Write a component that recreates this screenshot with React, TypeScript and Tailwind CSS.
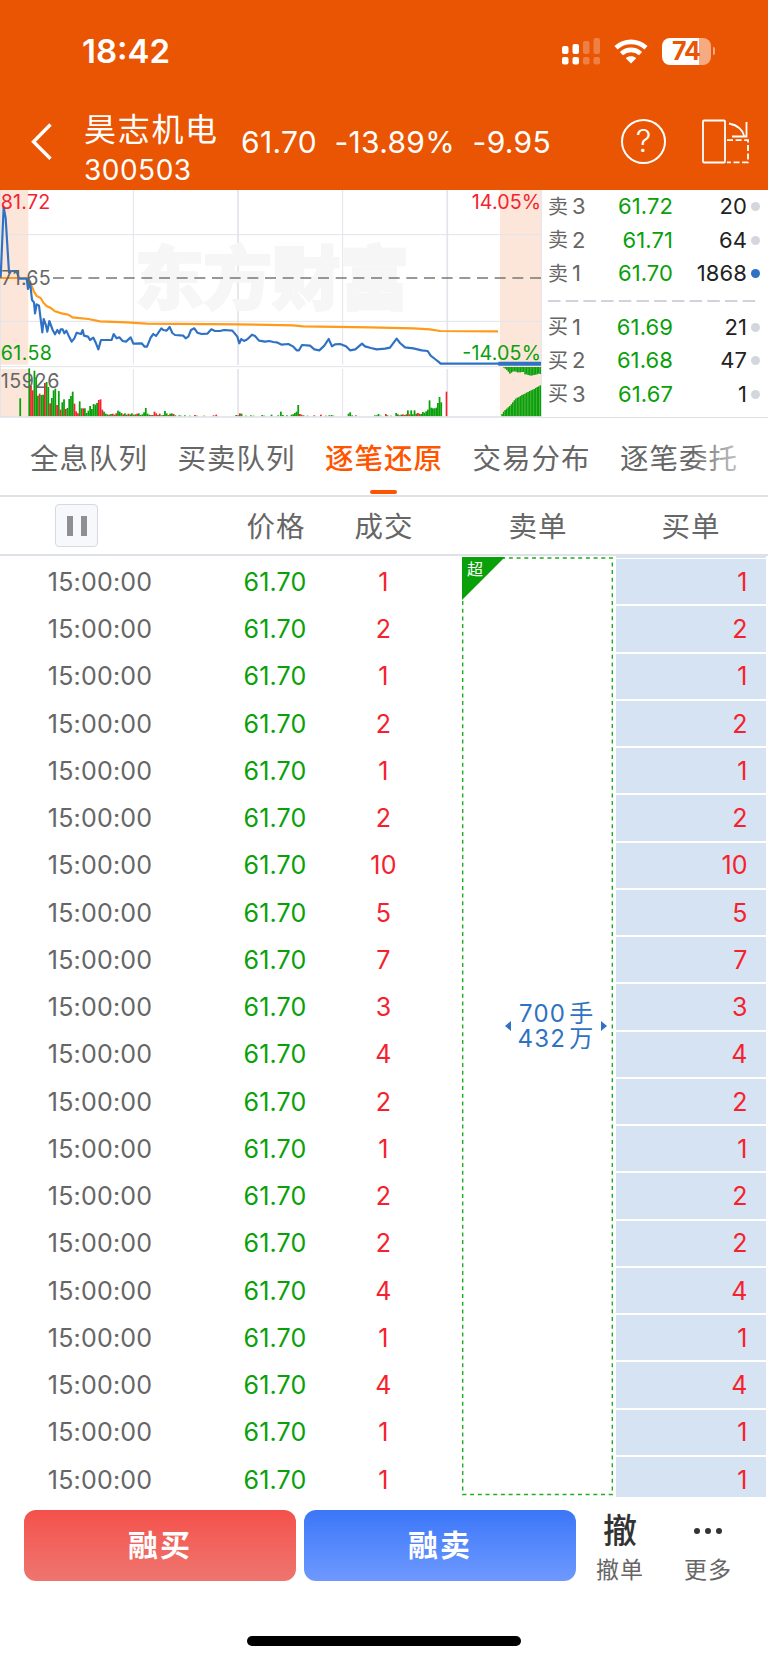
import type { ReactNode } from 'react';

type Level = { label: string; price: string; volume: number; active?: boolean };

const asks: Level[] = [
  { label: '卖3', price: '61.72', volume: 20 },
  { label: '卖2', price: '61.71', volume: 64 },
  { label: '卖1', price: '61.70', volume: 1868, active: true },
];

const bids: Level[] = [
  { label: '买1', price: '61.69', volume: 21 },
  { label: '买2', price: '61.68', volume: 47 },
  { label: '买3', price: '61.67', volume: 1 },
];

const tabs = ['全息队列', '买卖队列', '逐笔还原', '交易分布', '逐笔委托'];
const activeTab = 2;

const trades = [1, 2, 1, 2, 1, 2, 10, 5, 7, 3, 4, 2, 1, 2, 2, 4, 1, 4, 1, 1];

const RED = '#f5222d';
const GREEN = '#0aa00a';

// Minute volume bars: height, negative when the bar is red
const openBars = [
  144, -92, -78, 137, 118, 62, -68, 64, 65, -100, 103, 88, -39, 55, 78, 83, -34, 76, -20, 42, 51, -22, 25, 52, 61, 74,
  -38, -15, -9, 45, 24, -24, 24, 10, 17, 31, 22, 37, 35, 40, -49, -51, -20, 14, 8, 6, -5, 7, -8, 5, -9, 17, 14, 10, -6,
  9, 5, -8, 6, 9, -5, 6, -8, 9, 4, 6, 12, 25, 8, 5, -4, 4, -14, -9, 4, -8, 3, 4, 16, 9, -4, 8, 9, -7, 3,
];
const closeBars = [
  10, 6, -3, 5, -6, 4, -6, 18, -6, 18, 6, 18, 8, -10, -8, 7, 13, 11, 15, 20, 48, 26, 24, 24, 26, 40, 58, 42,
];
const sparseBars: [number, number][] = [
  [535, 3], [540, 2], [552, 3], [567, 2], [582, -4], [588, 2], [610, 2], [638, -3], [646, -5], [706, 4], [712, 3],
  [717, -9], [722, 8], [735, 2], [750, 3], [758, 2], [784, 4], [790, 2], [812, 5], [832, 3], [840, 14], [846, 4],
  [858, 3], [872, 5], [877, 6], [882, 10], [887, 14], [892, 34], [897, -7], [902, -5], [908, 3], [920, 2], [940, -3],
  [960, -5], [975, -2], [985, 3], [992, 4], [998, 2], [1043, 8], [1048, 12], [1054, 3], [1065, -3], [1122, 3],
  [1128, 3], [1133, 7], [1140, 2], [1155, -7], [1160, 3], [1170, 2],
];
const askDepth = [0, 0, 2, 5, 9, 14, 20, 17, 14, 13, 14, 16, 16, 16, 15, 15, 22, 22, 24, 25, 26, 25, 24, 23, 22, 20, 21];
const bidDepth = [7, 14, 19, 23, 27, 31, 36, 42, 48, 53, 56, 58, 61, 64, 66, 68, 71, 73, 76, 78, 80, 82, 85, 88, 90, 93];

const pricePoints =
  '2,278 11,65 17,100 27,262 35,258 50,258 57,281 80,281 84,312 90,290 96,345 102,352 105,385 110,358 117,362 127,442 131,402 137,418 142,440 148,408 158,435 165,448 172,435 178,445 182,433 188,433 193,445 199,437 206,452 215,470 223,460 230,443 243,447 248,435 252,452 264,455 270,465 280,458 288,475 295,493 303,465 335,465 341,447 350,460 358,457 368,468 378,470 392,457 400,476 425,475 434,485 441,485 452,458 460,447 468,453 484,430 490,435 500,437 509,426 517,444 525,450 550,452 557,460 565,455 573,435 583,430 592,443 605,447 622,446 634,433 645,438 660,438 672,435 697,437 712,455 718,475 724,462 732,468 742,463 756,449 765,453 777,467 795,470 808,468 820,471 830,472 845,479 865,477 880,485 890,496 897,496 906,480 930,482 943,493 958,496 973,482 986,462 996,484 1005,478 1020,477 1038,484 1050,496 1066,493 1086,476 1095,484 1113,489 1130,493 1155,491 1170,488 1190,461 1200,474 1215,487 1240,490 1265,496 1283,498 1292,512 1305,522 1315,530 1322,536 1623,536';
const averagePoints =
  '0,279 80,279 90,290 96,305 102,320 110,333 122,339 130,353 140,363 152,369 165,379 185,385 205,389 218,397 265,402 300,409 380,412 440,416 714,418 880,421 910,424 1110,427 1240,430 1290,433 1320,438 1494,439';

function Bar({ x, h }: { x: number; h: number }) {
  return <rect x={x} y={694 - Math.abs(h)} width={5.3} height={Math.abs(h)} fill={h < 0 ? RED : GREEN} />;
}

function MinuteChart() {
  return (
    <svg className="block h-[228px] w-[542px] shrink-0" viewBox="0 15 1626 684" fontFamily="Inter" fontSize="59">
      <rect x="0" y="15" width="85" height="524" fill="#fce6da" />
      <rect x="0" y="552" width="85" height="143" fill="#fce6da" />
      <rect x="1500" y="15" width="123" height="680" fill="#fce6da" />
      <g stroke="#e2e4ea" strokeWidth="3">
        <path d="M1.5 15V696M400 15V539M400 552V696M1028 15V539M1028 552V696M1624 15V696" />
        <path d="M714 15V539M714 552V696M1342 15V539M1342 552V696" strokeWidth="5" />
        <path d="M0 149H1623M0 409H1623M0 545H1500" />
      </g>
      <text
        x="404"
        y="358"
        fontFamily="Noto Sans CJK SC"
        fontWeight="900"
        fontSize="208"
        textLength="824"
        fill="#f6f6f7"
        stroke="#f6f6f7"
        strokeWidth="6"
      >
        东方财富
      </text>
      <path d="M150 279H1623" stroke="#777" strokeWidth="5" strokeDasharray="33 20" strokeDashoffset="-9" />
      <polyline points={averagePoints} fill="none" stroke="#ff9a1a" strokeWidth="6.5" />
      <polyline points={pricePoints} fill="none" stroke="#2f72c4" strokeWidth="6.5" strokeLinejoin="round" />
      <path d="M1495 536H1623" stroke="#2f72c4" strokeWidth="12" />
      <Bar x={58} h={54} />
      {openBars.map((h, i) => (
        <Bar key={i} x={85 + i * 5.22} h={h} />
      ))}
      {sparseBars.map(([x, h]) => (
        <Bar key={x} x={x} h={h} />
      ))}
      {closeBars.map((h, i) => (
        <Bar key={i} x={1186 + i * 5.0} h={h} />
      ))}
      <rect x="1337" y="620" width="5" height="74" fill={RED} />
      {askDepth.map((h, i) => (
        <rect key={i} x={1500 + i * 4.55} y="546" width="4.7" height={h} fill={GREEN} />
      ))}
      {bidDepth.map((h, i) => (
        <rect key={i} x={1504 + i * 4.58} y={694 - h} width="4.7" height={h} fill={GREEN} />
      ))}
      <path d="M0 696H1626" stroke="#dcdfe6" strokeWidth="4" />
      <text x="2" y="71" fill={RED} textLength="149">81.72</text>
      <text x="4" y="299" fill="#666" textLength="148">71.65</text>
      <text x="2" y="524" fill={GREEN} textLength="154">61.58</text>
      <text x="2" y="609" fill="#666" textLength="176">15926</text>
      <text x="1623" y="71" fill={RED} textAnchor="end" textLength="208">14.05%</text>
      <text x="1623" y="524" fill={GREEN} textAnchor="end" textLength="236">-14.05%</text>
    </svg>
  );
}

function LevelRow({ level }: { level: Level }) {
  return (
    <div className="flex h-[33.5px] items-center text-[22px]">
      <span className="flex w-[46px] items-center text-[20px] text-[#666]">
        {level.label[0]}
        <span className="ml-[4px] text-[22px]">{level.label[1]}</span>
      </span>
      <span className="w-[79px] text-right tracking-[0.1px] text-[#0aa00a]">{level.price}</span>
      <span className="flex-1 text-right tracking-[0.1px] text-[#222]">{level.volume}</span>
      <span className={`ml-1 size-[9px] rounded-full ${level.active ? 'bg-[#2f72c4]' : 'bg-[#d3d6dd]'}`} />
    </div>
  );
}

function StatusBar() {
  return (
    <div className="flex h-[102px] items-center pl-[82px] pr-[53px]">
      <span className="pt-[2px] text-[33px] font-semibold">18:42</span>
      <svg className="ml-auto h-[28px] w-[39px]" viewBox="0 0 39 28" fill="#fff">
        <rect x="0" y="9" width="6.5" height="8" rx="2" />
        <rect x="10.5" y="7" width="6.5" height="10" rx="2" />
        <rect x="0" y="20" width="6.5" height="7.5" rx="2" />
        <rect x="10.5" y="20" width="6.5" height="7.5" rx="2" />
        <g opacity=".25">
          <rect x="21" y="4" width="6.5" height="13" rx="2" />
          <rect x="31.5" y="1" width="6.5" height="16" rx="2" />
          <rect x="21" y="20" width="6.5" height="7.5" rx="2" />
          <rect x="31.5" y="20" width="6.5" height="7.5" rx="2" />
        </g>
      </svg>
      <svg className="ml-[13px] h-[25px] w-[34px]" viewBox="0 0 34 25" fill="none" stroke="#fff" strokeWidth="4.6">
        <path d="M2 8.8C10.5.9 23.5.9 32 8.8" />
        <path d="M7.4 14.6C13 9.6 21 9.6 26.6 14.6" />
        <path d="M17 24.4L11.8 19.2C14.6 16.6 19.4 16.6 22.2 19.2Z" fill="#fff" stroke="none" />
      </svg>
      <div className="ml-[14px] flex h-[27px] w-[49px] items-center justify-center rounded-lg bg-[linear-gradient(90deg,#fff_75%,#f6aa82_75%)] pt-px text-[25px] font-bold tracking-[-1px] text-[#ea5504]">
        74
      </div>
      <span className="ml-[2px] h-[8px] w-[2.5px] rounded-r-full bg-[#f6aa82]" />
    </div>
  );
}

function TitleBar() {
  return (
    <div className="flex h-[88px] items-start">
      <svg className="ml-[30px] mt-[20px] h-[40px] w-[24px]" viewBox="0 0 24 40" fill="none" stroke="#fff" strokeWidth="3.4">
        <path d="M20.5 2.5L3.5 19.7L20.5 36.8" />
      </svg>
      <div className="ml-[30px] w-[157px]">
        <div className="mt-[9px] text-[32px] leading-[38px] tracking-[1.7px]">昊志机电</div>
        <div className="mt-[5px] text-[28px] leading-[32px] tracking-[0.5px]">300503</div>
      </div>
      <div className="mt-[22px] flex gap-[17.5px] text-[30px] leading-[36px] tracking-[0.3px]">
        <span>61.70</span>
        <span>-13.89%</span>
        <span>-9.95</span>
      </div>
      <div className="ml-auto mr-[35px] mt-[17px] flex size-[45px] items-center justify-center rounded-full border-2 border-white text-[31px] font-light">
        ?
      </div>
      <svg className="mr-[18px] mt-[16px] h-[47px] w-[49px]" viewBox="0 0 49 47" fill="none" stroke="#fff" strokeWidth="1.8">
        <rect x="2" y="2.5" width="22" height="42" rx="1" />
        <path d="M28 5.5C36 7 42 12 43.5 19M45.5 4V18.5H31" />
        <path d="M26 22.2H47V44.3H26" strokeDasharray="6 2.6" />
      </svg>
    </div>
  );
}

function HeadCell({ className, children }: { className: string; children: ReactNode }) {
  return <span className={`pt-[3px] text-center text-[28.5px] tracking-[1px] ${className}`}>{children}</span>;
}

function Tape() {
  return (
    <div className="flex h-[941px] overflow-hidden text-[25px]">
      <div className="w-[462px] pt-[3px] tracking-[0.2px]">
        {trades.map((n, i) => (
          <div key={i} className="flex h-[47.25px] items-center">
            <span className="w-[200px] text-center text-[#666]">15:00:00</span>
            <span className="w-[150px] text-center text-[#0aa00a]">61.70</span>
            <span className="w-[67px] text-center text-[#f5222d]">{n}</span>
          </div>
        ))}
      </div>
      <div className="relative mt-px flex h-[939px] w-[151px] items-center justify-center">
        <svg className="absolute inset-0" width="151" height="939" fill="none">
          <rect x=".7" y="1" width="149.6" height="936.5" stroke="#1fae1f" strokeWidth="1.4" strokeDasharray="4 3.7" />
          <path d="M0 0H43L0 43Z" fill={GREEN} />
        </svg>
        <span className="absolute left-[5px] top-[2px] text-[16px] leading-[20px] text-white">超</span>
        <div className="mb-[2px] ml-[37px] flex items-center gap-[7px] text-[#2f72c4]">
          <span className="border-y-[5px] border-r-[6px] border-y-transparent border-r-[#2f72c4]" />
          <div className="text-right text-[24px] leading-[25px] tracking-[1.2px]">
            <div>700<span className="ml-[3px]">手</span></div>
            <div>432<span className="ml-[3px]">万</span></div>
          </div>
          <span className="border-y-[5px] border-l-[6px] border-y-transparent border-l-[#2f72c4]" />
        </div>
      </div>
      <div className="ml-[3px] w-[150px]">
        <div className="mb-[1.5px] h-[1.5px] bg-[#d6e3f2]" />
        {trades.map((n, i) => (
          <div key={i} className="flex h-[47.25px] items-center justify-end border-b-2 border-white bg-[#d6e3f2] pr-[18.5px] pt-[2px] text-[#f5222d]">
            {n}
          </div>
        ))}
      </div>
    </div>
  );
}

export default function App() {
  return (
    <div className="h-[1663px] w-[768px] overflow-hidden bg-white font-['Inter','Noto_Sans_CJK_SC',sans-serif]">
      <header className="h-[190px] bg-[#ea5504] text-white">
        <StatusBar />
        <TitleBar />
      </header>

      <section className="flex h-[228px]">
        <MinuteChart />
        <div className="flex-1 border-b border-[#dcdfe6] pl-[6px] pr-[8px]">
          {asks.map((l) => (
            <LevelRow key={l.label} level={l} />
          ))}
          <svg className="my-[9px] block h-[2px] w-[208px]">
            <path d="M0 1H208" stroke="#d0d3da" strokeWidth="2" strokeDasharray="12.5 5.2" />
          </svg>
          {bids.map((l) => (
            <LevelRow key={l.label} level={l} />
          ))}
        </div>
      </section>

      <nav className="relative flex h-[79px] items-center gap-[30.5px] border-b-2 border-[#dfe1e8] pl-[30px] text-[28.5px] tracking-[1px] text-[#666]">
        {tabs.map((name, i) => (
          <div key={name} className={`relative flex h-full w-[117px] shrink-0 items-center whitespace-nowrap pt-[6px] ${i === activeTab ? 'font-medium text-[#ff5500]' : ''}`}>
            {name}
            {i === activeTab && <span className="absolute bottom-[1px] left-[45px] h-[4px] w-[27px] rounded-full bg-[#ff5500]" />}
          </div>
        ))}
        <span className="absolute right-0 top-0 h-[76px] w-[78px] bg-linear-to-r from-white/0 to-white" />
      </nav>

      <div className="flex h-[59px] items-center border-b-2 border-[#dfe1e8] text-[#666]">
        <button className="ml-[55px] flex size-[43px] items-center justify-center gap-[8px] rounded-[4px] border border-[#d6d9e0] bg-[#f6f8fb]">
          <span className="h-[20px] w-[6px] bg-[#8e8e96]" />
          <span className="h-[20px] w-[6px] bg-[#8e8e96]" />
        </button>
        <HeadCell className="ml-[147px] w-[62px]">价格</HeadCell>
        <HeadCell className="ml-[46px] w-[62px]">成交</HeadCell>
        <HeadCell className="ml-[92px] w-[62px]">卖单</HeadCell>
        <HeadCell className="ml-[91px] w-[62px]">买单</HeadCell>
      </div>

      <Tape />

      <footer className="flex items-start pl-[24px] pt-[13px]">
        <button className="h-[71px] w-[272px] rounded-xl bg-linear-to-b from-[#f4504b] to-[#ee756f] text-[30px] font-bold tracking-[2px] text-white">
          融买
        </button>
        <button className="ml-[8px] h-[71px] w-[272px] rounded-xl bg-linear-to-b from-[#3b76f8] to-[#6e99ff] text-[30px] font-bold tracking-[2px] text-white">
          融卖
        </button>
        <div className="flex w-[88px] flex-col items-center">
          <span className="h-[42px] text-[34px] font-medium leading-[42px] text-[#333]">撤</span>
          <span className="text-[23px] leading-[37px] tracking-[1px] text-[#666]">撤单</span>
        </div>
        <div className="flex w-[88px] flex-col items-center">
          <span className="flex h-[42px] items-center gap-[5px]">
            <i className="size-[6px] rounded-full bg-[#333]" />
            <i className="size-[6px] rounded-full bg-[#333]" />
            <i className="size-[6px] rounded-full bg-[#333]" />
          </span>
          <span className="text-[23px] leading-[37px] tracking-[1px] text-[#666]">更多</span>
        </div>
      </footer>
      <div className="mx-auto mt-[47px] h-[10px] w-[274px] rounded-full bg-black" />
    </div>
  );
}
